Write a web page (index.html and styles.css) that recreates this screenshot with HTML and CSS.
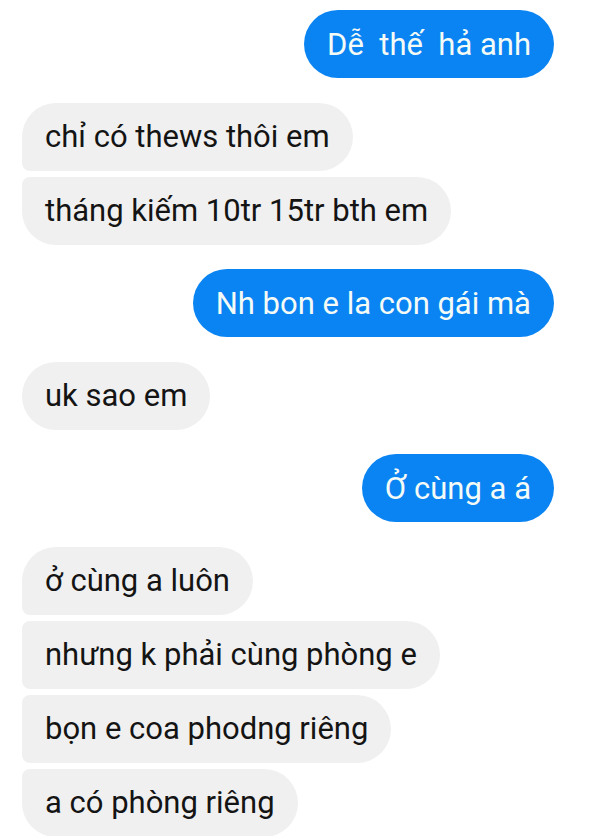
FILE: index.html
```html
<!DOCTYPE html>
<html lang="vi">
<head>
<meta charset="utf-8">
<link rel="stylesheet" href="styles.css">
</head>
<body>
<div class="chat">
  <div class="group out">
    <div class="msg">Dễ  thế  hả anh</div>
  </div>
  <div class="group in">
    <div class="msg">chỉ có thews thôi em</div>
    <div class="msg">tháng kiếm 10tr 15tr bth em</div>
  </div>
  <div class="group out">
    <div class="msg">Nh bon e la con gái mà</div>
  </div>
  <div class="group in">
    <div class="msg">uk sao em</div>
  </div>
  <div class="group out">
    <div class="msg">Ở cùng a á</div>
  </div>
  <div class="group in">
    <div class="msg">ở cùng a luôn</div>
    <div class="msg">nhưng k phải cùng phòng e</div>
    <div class="msg">bọn e coa phodng riêng</div>
    <div class="msg">a có phòng riêng</div>
  </div>
</div>
</body>
</html>
```
FILE: styles.css
```css
html, body {
  margin: 0;
  padding: 0;
  background: #ffffff;
}
body {
  font-family: Roboto, "Noto Sans", "Liberation Sans", sans-serif;
  overflow: hidden;
}
.chat {
  display: flex;
  flex-direction: column;
  gap: 24.6px;
  padding: 10px 46px 0 22px;
}
.group {
  display: flex;
  flex-direction: column;
  gap: 6px;
}
.group.out { align-items: flex-end; }
.group.in { align-items: flex-start; }
.msg {
  height: 68px;
  box-sizing: border-box;
  display: flex;
  align-items: center;
  padding: 0 23px;
  font-size: 31px;
  white-space: pre;
  border-radius: 34px;
}
.out .msg {
  background: #0a84f2;
  color: #f4fbf6;
}
.in .msg {
  background: #f0f0f0;
  color: #141414;
}
.in .msg:not(:last-child) { border-bottom-left-radius: 8px; }
.in .msg:not(:first-child) { border-top-left-radius: 8px; }
```
